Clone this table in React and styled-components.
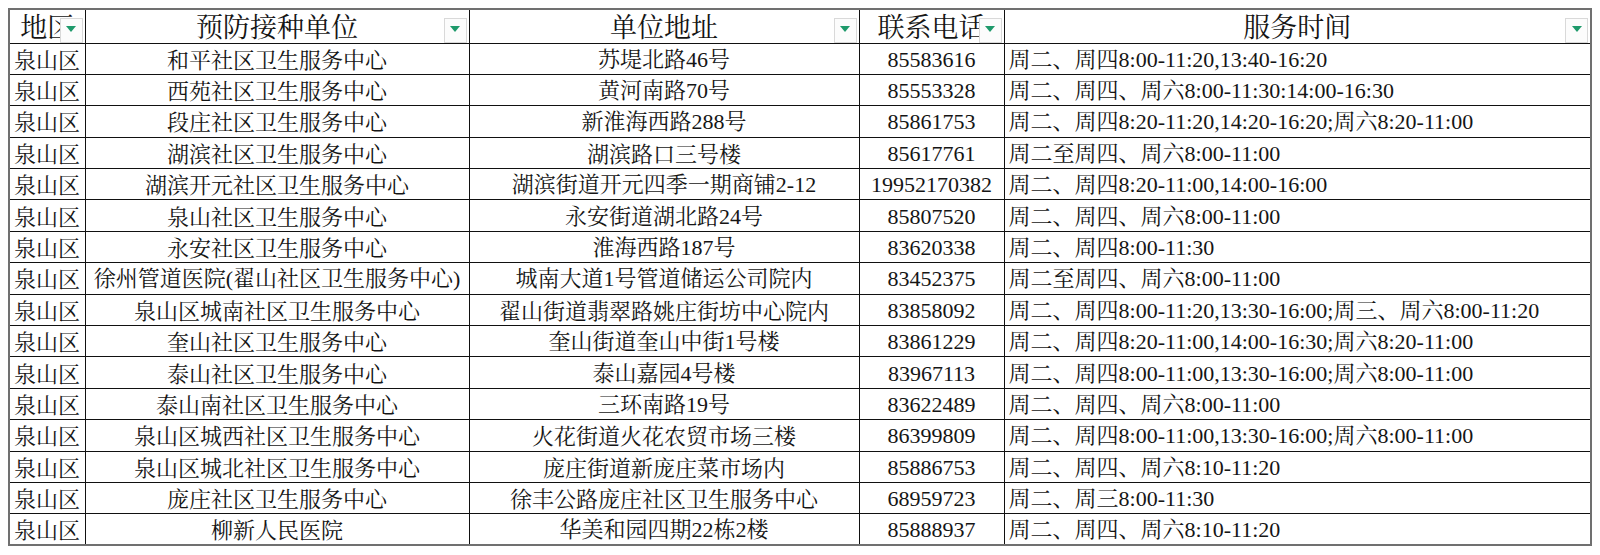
import React from 'react';
import styled, { createGlobalStyle } from 'styled-components';

const GlobalStyle = createGlobalStyle`
  body {
    margin: 8px;
    background: #ffffff;
    font-family: "Noto Serif CJK SC", "Noto Sans CJK SC", serif;
    color: #151515;
  }
`;

const Sheet = styled.table`
  border-collapse: collapse;
  table-layout: fixed;
  width: 1582px;
  border: 2px solid #707070;
`;

const HeadRow = styled.tr`
  height: 34px;
`;

const Row = styled.tr`
  height: 31.4px;
`;

const HeadCell = styled.th`
  position: relative;
  padding: 0;
  font-weight: normal;
  font-size: 27px;
  line-height: 30px;
  text-align: center;
  white-space: nowrap;
  overflow: visible;
  border: 1px solid #111;
  border-top: 2px solid #707070;
`;

const Cell = styled.td`
  padding: 0 ${(p) => (p.$align === 'left' ? '4px' : '0')};
  font-size: 22px;
  line-height: 28px;
  text-align: ${(p) => p.$align || 'center'};
  white-space: nowrap;
  overflow: hidden;
  border: 1px solid #111;
`;

const Latin = styled.span`
  font-family: "Liberation Serif", serif;
`;

const FilterButton = styled.span`
  position: absolute;
  right: 2px;
  bottom: 0;
  width: 23px;
  height: 25px;
  box-sizing: border-box;
  border: 1px solid #d9d9d9;
  background: #fcfcfc;
  display: flex;
  align-items: center;
  justify-content: center;
`;

const Arrow = styled.span`
  width: 0;
  height: 0;
  margin-top: -2px;
  border-left: 5px solid transparent;
  border-right: 5px solid transparent;
  border-top: 6px solid #1e9a6b;
`;

const columns = [
  { title: '地区', width: 76 },
  { title: '预防接种单位', width: 384 },
  { title: '单位地址', width: 390 },
  { title: '联系电话', width: 145 },
  { title: '服务时间', width: 587 },
];

const rows = [
  ['和平社区卫生服务中心', '苏堤北路46号', '85583616', '周二、周四8:00-11:20,13:40-16:20'],
  ['西苑社区卫生服务中心', '黄河南路70号', '85553328', '周二、周四、周六8:00-11:30:14:00-16:30'],
  ['段庄社区卫生服务中心', '新淮海西路288号', '85861753', '周二、周四8:20-11:20,14:20-16:20;周六8:20-11:00'],
  ['湖滨社区卫生服务中心', '湖滨路口三号楼', '85617761', '周二至周四、周六8:00-11:00'],
  ['湖滨开元社区卫生服务中心', '湖滨街道开元四季一期商铺2-12', '19952170382', '周二、周四8:20-11:00,14:00-16:00'],
  ['泉山社区卫生服务中心', '永安街道湖北路24号', '85807520', '周二、周四、周六8:00-11:00'],
  ['永安社区卫生服务中心', '淮海西路187号', '83620338', '周二、周四8:00-11:30'],
  ['徐州管道医院(翟山社区卫生服务中心)', '城南大道1号管道储运公司院内', '83452375', '周二至周四、周六8:00-11:00'],
  ['泉山区城南社区卫生服务中心', '翟山街道翡翠路姚庄街坊中心院内', '83858092', '周二、周四8:00-11:20,13:30-16:00;周三、周六8:00-11:20'],
  ['奎山社区卫生服务中心', '奎山街道奎山中街1号楼', '83861229', '周二、周四8:20-11:00,14:00-16:30;周六8:20-11:00'],
  ['泰山社区卫生服务中心', '泰山嘉园4号楼', '83967113', '周二、周四8:00-11:00,13:30-16:00;周六8:00-11:00'],
  ['泰山南社区卫生服务中心', '三环南路19号', '83622489', '周二、周四、周六8:00-11:00'],
  ['泉山区城西社区卫生服务中心', '火花街道火花农贸市场三楼', '86399809', '周二、周四8:00-11:00,13:30-16:00;周六8:00-11:00'],
  ['泉山区城北社区卫生服务中心', '庞庄街道新庞庄菜市场内', '85886753', '周二、周四、周六8:10-11:20'],
  ['庞庄社区卫生服务中心', '徐丰公路庞庄社区卫生服务中心', '68959723', '周二、周三8:00-11:30'],
  ['柳新人民医院', '华美和园四期22栋2楼', '85888937', '周二、周四、周六8:10-11:20'],
];

// digits and ascii punctuation use the Times-like face, as in the sheet
const Mixed = ({ text }) =>
  text.split(/([\x20-\x7e]+)/).map((part, i) =>
    /^[\x20-\x7e]+$/.test(part) ? <Latin key={i}>{part}</Latin> : part
  );

export default function App() {
  return (
    <>
      <GlobalStyle />
      <Sheet>
        <colgroup>
          {columns.map((c) => (
            <col key={c.title} style={{ width: c.width }} />
          ))}
        </colgroup>
        <thead>
          <HeadRow>
            {columns.map((c) => (
              <HeadCell key={c.title}>
                {c.title}
                <FilterButton>
                  <Arrow />
                </FilterButton>
              </HeadCell>
            ))}
          </HeadRow>
        </thead>
        <tbody>
          {rows.map((r, i) => (
            <Row key={i}>
              <Cell $align="left">泉山区</Cell>
              {r.map((text, j) => (
                <Cell key={j} $align={j === 3 ? 'left' : undefined}>
                  <Mixed text={text} />
                </Cell>
              ))}
            </Row>
          ))}
        </tbody>
      </Sheet>
    </>
  );
}
